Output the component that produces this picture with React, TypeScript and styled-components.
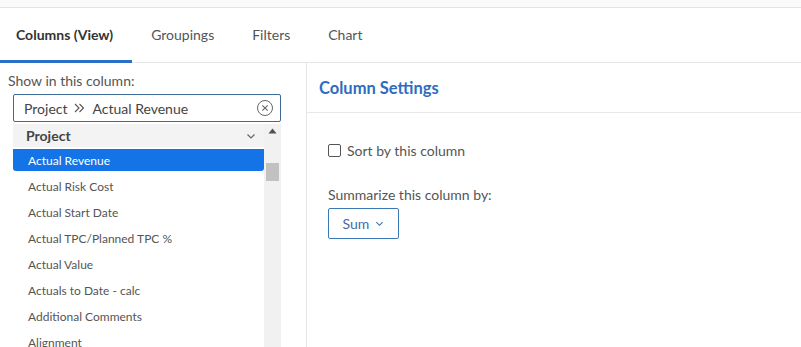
import React from 'react';
import styled, { createGlobalStyle } from 'styled-components';

const Global = createGlobalStyle`
    html, body {
        margin: 0;
        padding: 0;
        background: #ffffff;
        font-family: Lato, "Open Sans", Arial, sans-serif;
    }
    * { box-sizing: border-box; }
`;

const Page = styled.div`
    width: 801px;
    height: 347px;
    overflow: hidden;
    display: flex;
    flex-direction: column;
`;
const TopStrip = styled.div`
    height: 8px;
    background: #fafafa;
    border-bottom: 1px solid #e3e3e3;
    flex: none;
`;
const Tabs = styled.div`
    display: flex;
    height: 55px;
    border-bottom: 1px solid #e6e6e6;
    flex: none;
`;
const Tab = styled.div<{ $active?: boolean }>`
    display: flex;
    align-items: center;
    padding: 1px 19px 0;
    font-size: 14px;
    color: ${p => (p.$active ? '#333' : '#555')};
    font-weight: ${p => (p.$active ? 700 : 400)};
    border-bottom: 3px solid ${p => (p.$active ? '#2b6fc6' : 'transparent')};
    margin-bottom: -1px;
    &:first-child { padding-left: 16px; }
`;
const Body = styled.div`
    display: flex;
    flex: 1;
    min-height: 0;
`;
const Left = styled.div`
    width: 307px;
    border-right: 1px solid #e6e6e6;
    padding-top: 8px;
    flex: none;
`;
const Label = styled.div`
    font-size: 14px;
    color: #555;
    padding-left: 8px;
    height: 20px;
    line-height: 20px;
`;
const Input = styled.div`
    margin: 3px 0 0 13px;
    width: 268px;
    height: 28px;
    border: 1px solid #3e6b97;
    border-radius: 2px;
    display: flex;
    align-items: center;
    padding: 0 6px 0 10px;
    font-size: 14px;
    color: #444;
    gap: 7px;
`;
const Spacer = styled.div`
    flex: 1;
`;
const List = styled.div`
    margin: 2px 0 0 13px;
    width: 268px;
    display: flex;
`;
const Items = styled.div`
    flex: 1;
`;
const GroupHead = styled.div`
    height: 23px;
    background: #f3f3f3;
    display: flex;
    align-items: center;
    padding: 0 8px 0 13px;
    font-size: 14px;
    font-weight: 700;
    color: #444;
`;
const Item = styled.div<{ $selected?: boolean }>`
    height: ${p => (p.$selected ? '22px' : '26px')};
    margin: ${p => (p.$selected ? '2px 0' : '0')};
    display: flex;
    align-items: center;
    padding-left: 15px;
    font-size: 12px;
    color: ${p => (p.$selected ? '#fff' : '#555')};
    background: ${p => (p.$selected ? '#1473e6' : 'transparent')};
    border-radius: ${p => (p.$selected ? '0 0 3px 3px' : '0')};
`;
const Scrollbar = styled.div`
    width: 17px;
    background: #f1f1f1;
    display: flex;
    flex-direction: column;
    align-items: center;
    padding-top: 4px;
    height: 260px;
`;
const Thumb = styled.div`
    width: 13px;
    height: 18px;
    background: #c1c1c1;
    margin-top: 29px;
`;
const Right = styled.div`
    flex: 1;
`;
const Header = styled.div`
    height: 50px;
    border-bottom: 1px solid #e8e8e8;
    display: flex;
    align-items: center;
    padding-left: 12px;
    font-size: 16.5px;
    font-weight: 700;
    color: #2d6cc0;
`;
const Content = styled.div`
    padding: 29px 0 0 21px;
`;
const CheckRow = styled.label`
    display: flex;
    align-items: center;
    gap: 6px;
    font-size: 14px;
    color: #555;
`;
const Box = styled.span`
    width: 13px;
    height: 13px;
    border: 1px solid #555;
    border-radius: 2px;
    display: inline-block;
`;
const SubLabel = styled.div`
    margin-top: 27px;
    font-size: 14px;
    color: #555;
`;
const Select = styled.div`
    margin-top: 5px;
    width: 71px;
    height: 31px;
    border: 1px solid #3a78b8;
    border-radius: 2px;
    display: flex;
    align-items: center;
    justify-content: center;
    gap: 6px;
    font-size: 14px;
    color: #3d6ea8;
`;

const Chevron = ({ color = '#666', size = 10 }: { color?: string; size?: number }) => (
    <svg width={size} height={size} viewBox="0 0 10 10">
        <path d="M1.5 3.5 L5 7 L8.5 3.5" fill="none" stroke={color} strokeWidth="1.2" />
    </svg>
);

const items = [
    'Actual Risk Cost',
    'Actual Start Date',
    'Actual TPC/Planned TPC %',
    'Actual Value',
    'Actuals to Date - calc',
    'Additional Comments',
    'Alignment',
];

export default function App() {
    return (
        <Page>
            <Global />
            <TopStrip />
            <Tabs>
                <Tab $active>Columns (View)</Tab>
                <Tab>Groupings</Tab>
                <Tab>Filters</Tab>
                <Tab>Chart</Tab>
            </Tabs>
            <Body>
                <Left>
                    <Label>Show in this column:</Label>
                    <Input>
                        <span>Project</span>
                        <svg width="11" height="10" viewBox="0 0 11 10">
                            <path d="M1 1 L5 5 L1 9 M5.5 1 L9.5 5 L5.5 9" fill="none" stroke="#555" strokeWidth="1.1" />
                        </svg>
                        <span>Actual Revenue</span>
                        <Spacer />
                        <svg width="18" height="18" viewBox="0 0 18 18">
                            <circle cx="9" cy="9" r="7.5" fill="none" stroke="#666" strokeWidth="1" />
                            <path d="M6.3 6.3 L11.7 11.7 M11.7 6.3 L6.3 11.7" stroke="#666" strokeWidth="1.1" />
                        </svg>
                    </Input>
                    <List>
                        <Items>
                            <GroupHead>
                                <span>Project</span>
                                <Spacer />
                                <Chevron />
                            </GroupHead>
                            <Item $selected>Actual Revenue</Item>
                            {items.map(t => (
                                <Item key={t}>{t}</Item>
                            ))}
                        </Items>
                        <Scrollbar>
                            <svg width="9" height="6" viewBox="0 0 9 6">
                                <path d="M0.5 5.5 L4.5 0.5 L8.5 5.5 Z" fill="#505050" />
                            </svg>
                            <Thumb />
                        </Scrollbar>
                    </List>
                </Left>
                <Right>
                    <Header>Column Settings</Header>
                    <Content>
                        <CheckRow>
                            <Box />
                            Sort by this column
                        </CheckRow>
                        <SubLabel>Summarize this column by:</SubLabel>
                        <Select>
                            Sum
                            <Chevron color="#3d6ea8" size={9} />
                        </Select>
                    </Content>
                </Right>
            </Body>
        </Page>
    );
}
